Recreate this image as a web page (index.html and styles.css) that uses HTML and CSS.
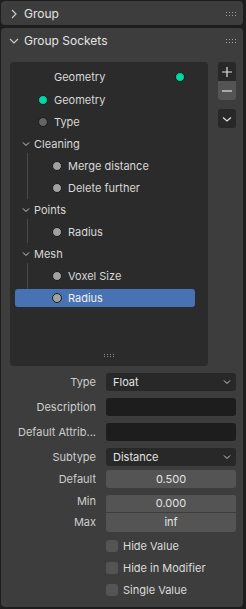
FILE: index.html
```html
<!DOCTYPE html>
<html lang="en">
<head>
  <meta charset="UTF-8">
  <title>Group Sockets</title>
  <link rel="stylesheet" href="styles.css">
</head>
<body>
  <div class="sidebar">
    <div class="panel">
      <div class="panel-header">
        <svg class="chevron" width="10" height="10" viewBox="0 0 10 10"><path d="M3 1 L7 5 L3 9" /></svg>
        <span class="panel-title">Group</span>
        <span class="grip"></span>
      </div>
    </div>

    <div class="panel sockets">
      <div class="panel-header">
        <svg class="chevron" width="10" height="10" viewBox="0 0 10 10"><path d="M1 3 L5 7 L9 3" /></svg>
        <span class="panel-title">Group Sockets</span>
        <span class="grip"></span>
      </div>

      <div class="list-area">
        <div class="tree-list">
          <div class="row output">
            <span class="name">Geometry</span>
            <span class="dot geo"></span>
          </div>
          <div class="row input">
            <span class="dot geo"></span>
            <span class="name">Geometry</span>
          </div>
          <div class="row input">
            <span class="dot int"></span>
            <span class="name">Type</span>
          </div>

          <div class="group">
            <div class="row panel-row">
              <svg class="tree-chevron" width="8" height="8" viewBox="0 0 8 8"><path d="M1 2.5 L4 5.5 L7 2.5" /></svg>
              <span class="name">Cleaning</span>
            </div>
            <div class="children">
              <div class="row"><span class="dot float"></span><span class="name">Merge distance</span></div>
              <div class="row"><span class="dot float"></span><span class="name">Delete further</span></div>
            </div>
          </div>

          <div class="group">
            <div class="row panel-row">
              <svg class="tree-chevron" width="8" height="8" viewBox="0 0 8 8"><path d="M1 2.5 L4 5.5 L7 2.5" /></svg>
              <span class="name">Points</span>
            </div>
            <div class="children">
              <div class="row"><span class="dot float"></span><span class="name">Radius</span></div>
            </div>
          </div>

          <div class="group">
            <div class="row panel-row">
              <svg class="tree-chevron" width="8" height="8" viewBox="0 0 8 8"><path d="M1 2.5 L4 5.5 L7 2.5" /></svg>
              <span class="name">Mesh</span>
            </div>
            <div class="children">
              <div class="row"><span class="dot float"></span><span class="name">Voxel Size</span></div>
              <div class="row selected"><span class="dot float"></span><span class="name">Radius</span></div>
            </div>
          </div>

          <div class="list-grip"></div>
        </div>

        <div class="list-buttons">
          <div class="btn-pair">
            <button class="icon-btn">
              <svg width="12" height="12" viewBox="0 0 12 12"><path d="M6 1 V11 M1 6 H11" /></svg>
            </button>
            <button class="icon-btn light">
              <svg width="12" height="12" viewBox="0 0 12 12"><path d="M1 6 H11" /></svg>
            </button>
          </div>
          <button class="icon-btn single">
            <svg width="12" height="12" viewBox="0 0 12 12"><path d="M2 4.5 L6 8 L10 4.5" /></svg>
          </button>
        </div>
      </div>

      <div class="props">
        <label class="prop-label">Type</label>
        <div class="dropdown"><span>Float</span><svg width="8" height="8" viewBox="0 0 8 8"><path d="M1 2.5 L4 5.5 L7 2.5" /></svg></div>

        <label class="prop-label">Description</label>
        <div class="text-field"></div>

        <label class="prop-label">Default Attrib...</label>
        <div class="text-field"></div>

        <label class="prop-label">Subtype</label>
        <div class="dropdown"><span>Distance</span><svg width="8" height="8" viewBox="0 0 8 8"><path d="M1 2.5 L4 5.5 L7 2.5" /></svg></div>

        <label class="prop-label tight">Default</label>
        <div class="number tight">0.500</div>

        <label class="prop-label tight">Min</label>
        <div class="number top">0.000</div>
        <label class="prop-label joined">Max</label>
        <div class="number bottom joined">inf</div>
      </div>

      <div class="checks">
        <div class="check"><span class="box"></span>Hide Value</div>
        <div class="check"><span class="box"></span>Hide in Modifier</div>
        <div class="check"><span class="box"></span>Single Value</div>
      </div>
    </div>
  </div>
</body>
</html>
```

FILE: styles.css
```css
body {
  margin: 0;
  background: #1d1d1d;
  font-family: Inter, "Noto Sans", sans-serif;
  font-size: 11px;
  color: #dcdcdc;
}
.sidebar {
  width: 242px;
  padding: 1px 0 2px 1px;
  display: flex;
  flex-direction: column;
  gap: 3px;
}
.panel {
  background: #3d3d3d;
  border-radius: 4px;
}
.sockets {
  height: 579px;
}
.panel-header {
  height: 24px;
  display: flex;
  align-items: center;
  padding: 1px 6px 0 8px;
  box-sizing: border-box;
}
.chevron {
  fill: none;
  stroke: #cfcfcf;
  stroke-width: 1.1;
  margin-right: 5px;
}
.panel-title {
  flex: 1;
  font-size: 12px;
  color: #e4e4e4;
}
.grip, .list-grip {
  width: 10px;
  height: 4px;
  position: relative;
}
.grip::before, .list-grip::before {
  content: "";
  position: absolute;
  left: 0;
  top: 0;
  width: 1px;
  height: 1px;
  background: #a0a0a0;
  box-shadow: 3px 0 #a0a0a0, 6px 0 #a0a0a0, 9px 0 #a0a0a0,
    0 3px #a0a0a0, 3px 3px #a0a0a0, 6px 3px #a0a0a0, 9px 3px #a0a0a0;
}
.grip {
  margin-right: 1px;
}

/* list */
.list-area {
  display: flex;
  padding: 10px 7px 0 9px;
  gap: 10px;
}
.tree-list {
  width: 198px;
  height: 304px;
  background: #2b2b2b;
  border-radius: 4px;
  padding-top: 4px;
  box-sizing: border-box;
  position: relative;
}
.row {
  height: 22px;
  display: flex;
  align-items: center;
  color: #d8d8d8;
}
.row.output {
  padding-left: 44px;
  padding-right: 23px;
}
.row.output .name {
  flex: 1;
}
.row.input {
  padding-left: 28px;
}
.row.output + .row.input {
  margin-top: 1px;
}
.dot {
  width: 8px;
  height: 8px;
  border-radius: 50%;
  border: 1px solid #1a1a1a;
  margin-right: 6px;
}
.row.output .dot {
  margin-right: 0;
}
.dot.geo { background: #00d6a3; }
.dot.int { background: #646464; }
.dot.float { background: #a1a1a1; }
.panel-row {
  padding-left: 12px;
}
.tree-chevron {
  fill: none;
  stroke: #cfcfcf;
  stroke-width: 1;
  margin-right: 4px;
}
.children {
  margin-left: 17px;
  border-left: 1px solid #4a4a4a;
  margin-top: -2px;
  padding-top: 2px;
}
.children .row {
  padding-left: 37px;
  margin-left: -13px;
  margin-right: 13px;
}
.children .row.selected {
  background: #4772b3;
  border-radius: 3px;
  height: 18px;
  margin-top: 2px;
  margin-bottom: 2px;
  color: #f0f0f0;
}
.list-grip {
  position: absolute;
  left: 94px;
  bottom: 8px;
}
.list-grip::before {
  background: #8a8a8a;
  box-shadow: 3px 0 #8a8a8a, 6px 0 #8a8a8a, 9px 0 #8a8a8a,
    0 2px #8a8a8a, 3px 2px #8a8a8a, 6px 2px #8a8a8a, 9px 2px #8a8a8a;
}
.list-buttons {
  display: flex;
  flex-direction: column;
  gap: 9px;
}
.btn-pair {
  display: flex;
  flex-direction: column;
}
.icon-btn {
  width: 18px;
  height: 19px;
  padding: 0;
  border: none;
  background: #282828;
  border-radius: 3px;
  display: flex;
  align-items: center;
  justify-content: center;
}
.btn-pair .icon-btn:first-child {
  border-radius: 3px 3px 0 0;
}
.btn-pair .icon-btn.light {
  background: #545454;
  border-radius: 0 0 3px 3px;
}
.icon-btn svg {
  fill: none;
  stroke: #e0e0e0;
  stroke-width: 1.2;
}

/* properties */
.props {
  display: grid;
  grid-template-columns: 86px 130px;
  column-gap: 10px;
  row-gap: 7px;
  padding: 7px 0 0 9px;
}
.prop-label {
  text-align: right;
  height: 18px;
  line-height: 18px;
  color: #cdcdcd;
  white-space: nowrap;
}
.tight {
  margin-top: -3px;
}
.joined {
  margin-top: -7px;
}
.dropdown, .text-field, .number {
  height: 18px;
  border-radius: 3px;
  box-sizing: border-box;
}
.dropdown {
  background: #282828;
  display: flex;
  align-items: center;
  justify-content: space-between;
  padding: 0 5px 0 7px;
  color: #e4e4e4;
}
.dropdown svg {
  fill: none;
  stroke: #d0d0d0;
  stroke-width: 1;
}
.text-field {
  background: #1d1d1d;
}
.number {
  background: #545454;
  text-align: center;
  line-height: 18px;
  color: #e4e4e4;
}
.number.top {
  border-radius: 3px 3px 0 0;
  border-bottom: 1px solid #3d3d3d;
  line-height: 17px;
}
.number.bottom {
  border-radius: 0 0 3px 3px;
  height: 19px;
  line-height: 19px;
}
.checks {
  padding: 3px 0 0 105px;
}
.check {
  height: 22px;
  display: flex;
  align-items: center;
  color: #dcdcdc;
}
.box {
  width: 12px;
  height: 12px;
  background: #545454;
  border-radius: 3px;
  margin-right: 5px;
}
```
